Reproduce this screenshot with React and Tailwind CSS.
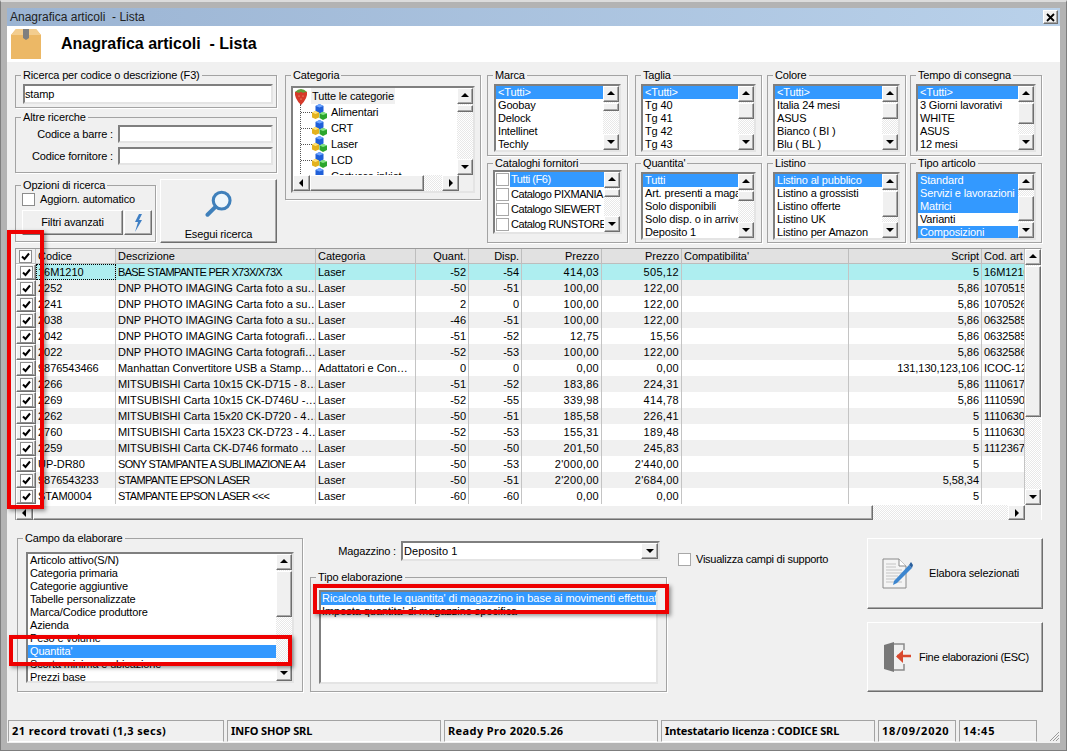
import React from "react";

const hatch = "bg-[repeating-conic-gradient(#e8e8e8_0_25%,#ffffff_0_50%)] bg-[length:2px_2px]";
const raised = "border border-t-white border-l-white border-r-[#6e6e6e] border-b-[#6e6e6e] bg-[#f0f0f0] shadow-[inset_-1px_-1px_0_#a8a8a8]";
const sunken = "border-2 border-t-[#7f7f7f] border-l-[#7f7f7f] border-r-[#e4e4e4] border-b-[#e4e4e4] bg-white";

const Arrow = ({ dir }) => {
  const shapes = {
    up: "1,6 9,6 5,2",
    down: "1,3 9,3 5,7",
    left: "6,1 6,9 2,5",
    right: "3,1 3,9 7,5",
  };
  return (
    <svg width="10" height="10" viewBox="0 0 10 10">
      <polygon points={shapes[dir]} fill="#000" />
    </svg>
  );
};

const ScrollBtn = ({ dir, className = "" }) => (
  <div className={`${raised} flex items-center justify-center shrink-0 ${className}`}>
    <Arrow dir={dir} />
  </div>
);

// vertical scrollbar, gap = hatch above the thumb, thumb = thumb height
const VScroll = ({ gap = 0, thumb = 8 }) => (
  <div className={`w-[16px] shrink-0 h-full flex flex-col ${hatch}`}>
    <ScrollBtn dir="up" className="h-[16px]" />
    <div style={{ height: gap }} className="shrink-0" />
    <div style={{ height: thumb }} className={`${raised} shrink-0`} />
    <div className="flex-1" />
    <ScrollBtn dir="down" className="h-[16px]" />
  </div>
);

const Group = ({ label, className = "", children }) => (
  <fieldset className={`border border-[#a3a3a3] shadow-[1px_1px_0_#ffffff] min-w-0 shrink-0 ${className}`}>
    <legend className="ml-[5px] px-[2px] leading-[14px] whitespace-pre">{label}</legend>
    {children}
  </fieldset>
);

const ListBox = ({ items, selected = [0], gap, thumb, className = "" }) => (
  <div className={`${sunken} flex overflow-hidden ${className}`}>
    <div className="flex-1 min-w-0 overflow-hidden">
      {items.map((it, i) => (
        <div
          key={it + i}
          className={`h-[13px] leading-[13px] pl-[2px] whitespace-pre overflow-hidden ${
            selected.includes(i) ? "bg-[#3399ff] text-white" : ""
          }`}
        >
          {it}
        </div>
      ))}
    </div>
    <VScroll gap={gap} thumb={thumb} />
  </div>
);

const CheckBox = ({ checked, className = "" }) => (
  <div className={`w-[13px] h-[13px] shrink-0 bg-white border border-[#8c8c8c] flex items-center justify-center ${className}`}>
    {checked && (
      <svg width="11" height="11" viewBox="0 0 11 11">
        <path d="M2 5.5 L4.5 8 L9 2.5" fill="none" stroke="#000" strokeWidth="2" />
      </svg>
    )}
  </div>
);

const Cubes = () => (
  <svg width="15" height="16" viewBox="0 0 15 16" className="shrink-0">
    <path d="M3.5 2 L7.5 0 L11.5 2 V7.5 L7.5 9.5 L3.5 7.5 Z" fill="#1f5fd8" />
    <path d="M3.5 2 L7.5 3.5 L11.5 2 L7.5 0 Z" fill="#6fa6ff" />
    <path d="M0 8.5 L3.5 7 L7 8.5 V13.5 L3.5 15 L0 13.5 Z" fill="#e4b21e" />
    <path d="M0 8.5 L3.5 10 L7 8.5 L3.5 7 Z" fill="#ffe27a" />
    <path d="M7.5 9.5 L11 8 L15 9.5 V14 L11 16 L7.5 14 Z" fill="#2ca52c" />
    <path d="M7.5 9.5 L11 11 L15 9.5 L11 8 Z" fill="#86e486" />
  </svg>
);

const Strawberry = () => (
  <svg width="14" height="17" viewBox="0 0 14 17" className="shrink-0">
    <path d="M1 4 Q7 1 13 4 Q14 10 7 17 Q0 10 1 4 Z" fill="#d63a2a" />
    <path d="M1 4 Q4 1 7 1 Q10 1 13 4 Q10 4 9 5 Q7 3 5 5 Q3 4 1 4 Z" fill="#5f9e3a" />
    <circle cx="5" cy="8" r="0.6" fill="#f6c9a0" />
    <circle cx="9" cy="8" r="0.6" fill="#f6c9a0" />
    <circle cx="7" cy="11" r="0.6" fill="#f6c9a0" />
  </svg>
);

const categories = ["Alimentari", "CRT", "Laser", "LCD", "Cartucce inkjet"];

const CategoryTree = () => (
  <div className={`${sunken} h-[107px] flex flex-col mx-[5px] mt-[4px] overflow-hidden`}>
    <div className="flex h-[87px] shrink-0">
      <div className="flex-1 min-w-0 overflow-hidden pl-[1px]">
        <div className="flex items-center h-[16px]">
          <Strawberry />
          <span className="ml-[3px] px-[1px] bg-[#f0f0f0] leading-[16px]">Tutte le categorie</span>
        </div>
        <div className="ml-[6px] border-l border-dotted border-[#555] h-[90px]">
          {categories.map((c) => (
            <div key={c} className="flex items-center h-[16px]">
              <div className="w-[11px] border-t border-dotted border-[#555]" />
              <Cubes />
              <span className="ml-[4px] whitespace-pre">{c}</span>
            </div>
          ))}
        </div>
      </div>
      <VScroll gap={1} thumb={7} />
    </div>
    <div className="flex flex-1 bg-[#f0f0f0]">
      <ScrollBtn dir="left" className="w-[17px]" />
      <div className={`${raised} w-[114px]`} />
      <div className={`w-[18px] ${hatch}`} />
      <ScrollBtn dir="right" className="w-[17px]" />
    </div>
  </div>
);

const catalogs = ["Tutti (F6)", "Catalogo PIXMANIA", "Catalogo SIEWERT", "Catalog RUNSTORE"];

const CatalogList = () => (
  <div className={`${sunken} h-[64px] mx-[5px] flex overflow-hidden`}>
    <div className="flex-1 min-w-0 overflow-hidden">
      {catalogs.map((c, i) => (
        <div key={c} className="flex items-center h-[15px] whitespace-pre">
          <CheckBox className="mx-[1px] border-[#a8a8a8]" />
          <span className={`flex-1 leading-[15px] pl-[1px] tracking-[-0.45px] ${i === 0 ? "bg-[#3399ff] text-white" : ""}`}>{c}</span>
        </div>
      ))}
    </div>
    <VScroll gap={1} thumb={8} />
  </div>
);

const Magnifier = () => (
  <svg width="30" height="30" viewBox="0 0 30 30">
    <circle cx="18" cy="12" r="9.5" fill="#eef6fb" stroke="#3f80bb" strokeWidth="3.5" />
    <path d="M11 19 L2 28" stroke="#3f80bb" strokeWidth="4.5" strokeLinecap="round" />
  </svg>
);

const Bolt = () => (
  <svg width="10" height="18" viewBox="0 0 10 18">
    <path d="M6 0 L2 8 L5 8 L2 18 L9 6 L6 6 L9 0 Z" fill="#3f7fc4" />
  </svg>
);

const BoxIcon = () => (
  <svg width="30" height="30" viewBox="0 0 30 30">
    <path d="M0 6 L5 0 H25 L30 6 V30 H0 Z" fill="#ecb866" />
    <path d="M5 0 H25 L30 6 H0 Z" fill="#f3cd8f" />
    <path d="M12 0 H18 V9 L15 11 L12 9 Z" fill="#7f7f7f" />
  </svg>
);

const DocIcon = () => (
  <svg width="32" height="32" viewBox="0 0 32 32">
    <path d="M1 1 H17 L24 8 V30 H1 Z" fill="#f4f4f4" stroke="#8a8a8a" />
    <path d="M17 1 V8 H24" fill="#fff" stroke="#8a8a8a" />
    <path d="M4 6 H14 M4 9 H14 M4 12 H20 M4 15 H20 M4 18 H16 M4 21 H14 M4 24 H20" stroke="#c4c4c4" />
    <path d="M12 23 L27 7 L30 10 L15 25 L11 27 Z" fill="#3d86cf" />
    <path d="M27 7 L29 4 L31 7 L30 10 Z" fill="#2a5f9c" />
  </svg>
);

const DoorIcon = () => (
  <svg width="30" height="32" viewBox="0 0 30 32">
    <path d="M10 3 H21 V9 M21 23 V29 H10" fill="none" stroke="#8a8a8a" strokeWidth="1.5" />
    <path d="M1 4 L11 1 V31 L1 28 Z" fill="#787878" />
    <path d="M14 15 H28" stroke="#d9492e" strokeWidth="2.5" />
    <path d="M13 15.5 L20 9 V22 Z" fill="#d9492e" />
  </svg>
);

const columns = [
  { w: "w-[80px]", label: "Codice", key: 0 },
  { w: "w-[200px]", label: "Descrizione", key: 1 },
  { w: "w-[100px]", label: "Categoria", key: 2 },
  { w: "w-[53px]", label: "Quant.", key: 3, right: true },
  { w: "w-[53px]", label: "Disp.", key: 4, right: true },
  { w: "w-[80px]", label: "Prezzo", key: 5, right: true, price: true },
  { w: "w-[80px]", label: "Prezzo", key: 6, right: true, price: true },
  { w: "w-[167px]", label: "Compatibilita'", key: 7 },
  { w: "w-[133px]", label: "Script", key: 8, right: true },
  { w: "w-[43px]", label: "Cod. art", key: 9 },
];

const rows = [
  ["16M1210", "BASE STAMPANTE PER X73X/X73X", "Laser", "-52", "-54", "414,03", "505,12", "", "5", "16M1210"],
  ["2252", "DNP PHOTO IMAGING Carta foto a su…", "Laser", "-50", "-51", "100,00", "122,00", "", "5,86", "1070515"],
  ["2241", "DNP PHOTO IMAGING Carta foto a su…", "Laser", "2", "0", "100,00", "122,00", "", "5,86", "1070526"],
  ["2038", "DNP PHOTO IMAGING Carta foto a su…", "Laser", "-46", "-51", "100,00", "122,00", "", "5,86", "0632585"],
  ["2042", "DNP PHOTO IMAGING Carta fotografi…", "Laser", "-51", "-52", "12,75", "15,56", "", "5,86", "0632585"],
  ["2022", "DNP PHOTO IMAGING Carta fotografi…", "Laser", "-52", "-53", "100,00", "122,00", "", "5,86", "0632586"],
  ["9876543466", "Manhattan Convertitore USB a Stamp…", "Adattatori e Con…", "0", "0", "0,00", "0,00", "", "131,130,123,106", "ICOC-12"],
  ["2266", "MITSUBISHI Carta 10x15 CK-D715 - 8…", "Laser", "-51", "-52", "183,86", "224,31", "", "5,86", "1110617"],
  ["2269", "MITSUBISHI Carta 10x15 CK-D746U -…", "Laser", "-52", "-55", "339,98", "414,78", "", "5,86", "1110590"],
  ["2262", "MITSUBISHI Carta 15x20 CK-D720 - 4…", "Laser", "-50", "-51", "185,58", "226,41", "", "5", "1110630"],
  ["2760", "MITSUBISHI Carta 15X23 CK-D723 - 4…", "Laser", "-52", "-53", "155,31", "189,48", "", "5", "1110630"],
  ["2259", "MITSUBISHI Carta CK-D746 formato …", "Laser", "-50", "-50", "201,50", "245,83", "", "5", "1112367"],
  ["UP-DR80", "SONY STAMPANTE A SUBLIMAZIONE A4", "Laser", "-50", "-53", "2'000,00", "2'440,00", "", "5", ""],
  ["9876543233", "STAMPANTE EPSON LASER", "Laser", "-50", "-51", "2'200,00", "2'684,00", "", "5,58,34", ""],
  ["STAM0004", "STAMPANTE EPSON LASER <<<", "Laser", "-60", "-60", "0,00", "0,00", "", "5", ""],
];

const cellTracking = (c, text) => {
  if (c.price) return "tracking-[0.3px]";
  if (c.key === 1 && !/[a-z]/.test(text)) return "tracking-[-0.7px]";
  return "tracking-[-0.05px]";
};

const ArticlesTable = () => (
  <div className="mx-[8px] mt-[5px] h-[272px] w-[1027px] border-t border-l border-t-[#9a9a9a] border-l-[#9a9a9a] border-r border-r-white bg-white flex flex-col">
    <div className="flex h-[256px] shrink-0">
      <div className="w-[1009px] shrink-0 overflow-hidden">
        <div className="flex h-[14px] bg-[#e1e1e1] border-b border-[#bdbdbd] box-content">
          <div className="w-[20px] shrink-0 flex items-center justify-center border-r border-[#bdbdbd] bg-[#f0f0f0]">
            <CheckBox checked />
          </div>
          {columns.map((c) => (
            <div
              key={c.key}
              className={`${c.w} shrink-0 px-[2px] leading-[15px] tracking-[-0.05px] whitespace-pre overflow-hidden border-r border-[#bdbdbd] ${
                c.right ? "text-right" : ""
              } ${c.key === 0 ? "bg-[#ececec]" : ""}`}
            >
              {c.label}
            </div>
          ))}
        </div>
        {rows.map((r, i) => (
          <div
            key={r[0]}
            className={`flex h-[16px] ${i === 0 ? "bg-[#aeeef0]" : i % 2 === 1 ? "bg-[#f0f0f0]" : "bg-white"}`}
          >
            <div className={`w-[20px] shrink-0 flex items-center justify-center ${raised}`}>
              <CheckBox checked />
            </div>
            {columns.map((c) => (
              <div
                key={c.key}
                className={`${c.w} shrink-0 px-[2px] leading-[16px] whitespace-pre overflow-hidden border-r border-[#c4c4c4] ${cellTracking(c, r[c.key])} ${
                  c.right ? "text-right" : ""
                } ${i === 0 && c.key === 0 ? "outline-1 outline-dotted outline-black -outline-offset-1" : ""}`}
              >
                {r[c.key]}
              </div>
            ))}
          </div>
        ))}
      </div>
      <VScroll gap={1} thumb={151} />
    </div>
    <div className="flex flex-1 bg-[#f0f0f0]">
      <ScrollBtn dir="left" className="w-[17px]" />
      <div className={`${raised} w-[840px]`} />
      <div className={`w-[135px] ${hatch}`} />
      <ScrollBtn dir="right" className="w-[17px]" />
    </div>
  </div>
);

const fields = [
  "Articolo attivo(S/N)",
  "Categoria primaria",
  "Categorie aggiuntive",
  "Tabelle personalizzate",
  "Marca/Codice produttore",
  "Azienda",
  "Peso e volume",
  "Quantita'",
  "Scorta minima e ubicazione",
  "Prezzi base",
];

const statusPanels = [
  ["w-[216px] tracking-[0.4px]", "21 record trovati (1,3 secs)"],
  ["w-[214px]", "INFO SHOP SRL"],
  ["w-[214px] tracking-[0.4px]", "Ready Pro 2020.5.26"],
  ["w-[214px]", "Intestatario licenza : CODICE SRL"],
  ["w-[78px] tracking-[0.8px]", "18/09/2020"],
  ["w-[78px] tracking-[0.8px]", "14:45"],
];

export default function App() {
  return (
    <div className="relative w-[1067px] h-[751px] overflow-hidden bg-[#b3b3b3] border-x border-b border-[#7d7d7d] border-t-2 border-t-[#dcdcdc] px-[6px] pt-[6px] pb-[7px] flex flex-col font-['Liberation_Sans',sans-serif] text-[11px] tracking-[-0.15px] text-black">
      <div className="h-[18px] shrink-0 flex items-center justify-between pl-[3px] pr-[2px] bg-gradient-to-r from-[#9bb4d3] to-[#b9d1ea] text-[12px] tracking-normal text-[#222]">
        <span className="whitespace-pre">Anagrafica articoli  - Lista</span>
        <div className={`${raised} w-[15px] h-[14px] flex items-center justify-center`}>
          <svg width="9" height="9" viewBox="0 0 9 9">
            <path d="M1 1 L8 8 M8 1 L1 8" stroke="#000" strokeWidth="1.8" />
          </svg>
        </div>
      </div>
      <div className="h-[36px] shrink-0 bg-white flex items-center pl-[4px]">
        <BoxIcon />
        <h1 className="ml-[20px] text-[16px] font-bold tracking-normal whitespace-pre">Anagrafica articoli  - Lista</h1>
      </div>

      <div className="flex-1 flex flex-col bg-[#f0f0f0]">
        <div className="flex pl-[8px] pt-[6px] h-[181px] shrink-0">
          <div className="w-[262px] shrink-0 flex flex-col">
            <Group label="Ricerca per codice o descrizione (F3)" className="h-[40px]">
              <div className={`${sunken} h-[20px] ml-[7px] mr-[3px] mt-[2px] leading-[16px]`}>stamp</div>
            </Group>
            <Group label="Altre ricerche" className="h-[63px] mt-[2px]">
              <div className="flex items-center justify-end h-[18px] mt-[1px] pr-[3px]">
                <span>Codice a barre :</span>
                <div className={`${sunken} h-[18px] w-[155px] ml-[5px]`} />
              </div>
              <div className="flex items-center justify-end h-[18px] mt-[4px] pr-[3px]">
                <span>Codice fornitore :</span>
                <div className={`${sunken} h-[18px] w-[155px] ml-[5px]`} />
              </div>
            </Group>
            <div className="flex mt-[5px]">
              <Group label="Opzioni di ricerca" className="w-[141px] h-[64px]">
                <div className="flex items-center pl-[6px] h-[13px] mt-[1px]">
                  <CheckBox />
                  <span className="ml-[5px] whitespace-pre">Aggiorn. automatico</span>
                </div>
                <div className="flex mt-[4px] pl-[6px]">
                  <div className={`${raised} w-[101px] h-[25px] flex items-center justify-center`}>Filtri avanzati</div>
                  <div className={`${raised} w-[28px] h-[25px] ml-[1px] flex items-center justify-center`}>
                    <Bolt />
                  </div>
                </div>
              </Group>
              <div className={`${raised} w-[117px] h-[64px] ml-[4px] mt-[1px] flex flex-col items-center pt-[10px]`}>
                <Magnifier />
                <span className="mt-[9px]">Esegui ricerca</span>
              </div>
            </div>
          </div>

          <Group label="Categoria" className="w-[196px] h-[132px] ml-[8px]">
            <CategoryTree />
          </Group>

          <div className="w-[141px] ml-[6px] flex flex-col shrink-0">
            <Group label="Marca" className="h-[88px]">
              <ListBox
                items={["<Tutti>", "Goobay", "Delock", "Intellinet", "Techly"]}
                gap={1}
                thumb={8}
                className="h-[68px] mx-[6px] mt-[2px]"
              />
            </Group>
            <Group label="Cataloghi fornitori" className="h-[87px]">
              <CatalogList />
            </Group>
          </div>

          <div className="w-[127px] ml-[7px] flex flex-col shrink-0">
            <Group label="Taglia" className="h-[88px]">
              <ListBox
                items={["<Tutti>", "Tg 40", "Tg 41", "Tg 42", "Tg 43"]}
                gap={1}
                thumb={16}
                className="h-[68px] mx-[5px] mt-[2px]"
              />
            </Group>
            <Group label="Quantita'" className="h-[87px]">
              <ListBox
                items={["Tutti", "Art. presenti a magazzino", "Solo disponibili", "Solo disp. o in arrivo", "Deposito 1"]}
                gap={1}
                thumb={10}
                className="h-[68px] mx-[5px] mt-[2px]"
              />
            </Group>
          </div>

          <div className="w-[139px] ml-[5px] flex flex-col shrink-0">
            <Group label="Colore" className="h-[88px]">
              <ListBox
                items={["<Tutti>", "Italia 24 mesi", "ASUS", "Bianco ( BI )", "Blu ( BL )"]}
                gap={1}
                thumb={16}
                className="h-[68px] mx-[5px] mt-[2px]"
              />
            </Group>
            <Group label="Listino" className="h-[87px]">
              <ListBox
                items={["Listino al pubblico", "Listino a grossisti", "Listino offerte", "Listino UK", "Listino per Amazon"]}
                gap={1}
                thumb={26}
                className="h-[68px] mx-[5px] mt-[2px]"
              />
            </Group>
          </div>

          <div className="w-[132px] ml-[4px] flex flex-col shrink-0">
            <Group label="Tempo di consegna" className="h-[88px]">
              <ListBox
                items={["<Tutti>", "3 Giorni lavorativi", "WHITE", "ASUS", "12 mesi"]}
                gap={1}
                thumb={21}
                className="h-[68px] mx-[5px] mt-[2px]"
              />
            </Group>
            <Group label="Tipo articolo" className="h-[87px]">
              <ListBox
                items={["Standard", "Servizi e lavorazioni", "Matrici", "Varianti", "Composizioni"]}
                selected={[0, 1, 2, 4]}
                gap={6}
                thumb={25}
                className="h-[68px] mx-[5px] mt-[2px]"
              />
            </Group>
          </div>
        </div>

        <ArticlesTable />

        <div className="flex pl-[10px] mt-[11px] h-[161px] shrink-0">
          <Group label="Campo da elaborare" className="w-[286px] h-[161px]">
            <ListBox
              items={fields}
              selected={[7]}
              gap={1}
              thumb={46}
              className="h-[131px] mx-[8px] mt-[7px]"
            />
          </Group>

          <div className="w-[357px] ml-[7px] shrink-0 flex flex-col">
            <div className="flex items-center justify-end h-[20px] mt-[10px] pr-[7px]">
              <span>Magazzino :</span>
              <div className={`${sunken} w-[259px] h-[20px] ml-[5px] flex items-center justify-between`}>
                <span className="pl-[1px] pt-[1px] tracking-[0.1px]">Deposito 1</span>
                <div className={`${raised} w-[17px] h-[16px] flex items-center justify-center`}>
                  <Arrow dir="down" />
                </div>
              </div>
            </div>
            <Group label="Tipo elaborazione" className="h-[122px] mt-[9px]">
              <div className={`${sunken} h-[94px] mx-[8px] mt-[6px] overflow-hidden tracking-[-0.05px]`}>
                <div className="h-[13px] leading-[13px] pl-[1px] bg-[#3399ff] text-white whitespace-pre overflow-hidden">
                  Ricalcola tutte le quantita' di magazzino in base ai movimenti effettuati
                </div>
                <div className="h-[13px] leading-[13px] pl-[1px] whitespace-pre">
                  Imposta quantita' di magazzino specifica
                </div>
              </div>
            </Group>
          </div>

          <div className="w-[189px] ml-[11px] shrink-0 pt-[20px]">
            <div className="flex items-center">
              <CheckBox className="border-[#a8a8a8]" />
              <span className="ml-[5px] whitespace-pre tracking-[-0.25px]">Visualizza campi di supporto</span>
            </div>
          </div>

          <div className="w-[176px] shrink-0 pt-[7px] flex flex-col gap-[13px]">
            <div className={`${raised} h-[71px] flex items-center pl-[14px]`}>
              <DocIcon />
              <span className="ml-[15px]">Elabora selezionati</span>
            </div>
            <div className={`${raised} h-[70px] flex items-center pl-[15px]`}>
              <DoorIcon />
              <span className="ml-[6px] whitespace-pre tracking-[-0.3px]">Fine elaborazioni (ESC)</span>
            </div>
          </div>
        </div>

        <div className="flex items-stretch h-[22px] mt-[28px] pl-[1px] shrink-0">
          {statusPanels.map(([w, text]) => (
            <div
              key={text}
              className={`${w} shrink-0 mr-[3px] px-[3px] border-t border-x border-[#a3a3a3] border-b border-b-white font-['Noto_Sans',sans-serif] font-bold leading-[20px] whitespace-pre overflow-hidden`}
            >
              {text}
            </div>
          ))}
          <div className="flex-1 flex justify-end items-end">
            <svg width="12" height="12" viewBox="0 0 12 12">
              <path d="M11 2 L2 11 M11 5 L5 11 M11 8 L8 11" stroke="#9a9a9a" />
            </svg>
          </div>
        </div>
      </div>

      <div className="absolute left-[6px] top-[228px] w-[37px] h-[279px] border-[4px] border-[#ee0000] shadow-[2px_2px_4px_rgba(0,0,0,0.4)]" />
      <div className="absolute left-[8px] top-[633px] w-[283px] h-[31px] border-[4px] border-[#ee0000] shadow-[2px_2px_4px_rgba(0,0,0,0.4)]" />
      <div className="absolute left-[312px] top-[582px] w-[356px] h-[30px] border-[4px] border-[#ee0000] shadow-[2px_2px_4px_rgba(0,0,0,0.4)]" />
    </div>
  );
}
